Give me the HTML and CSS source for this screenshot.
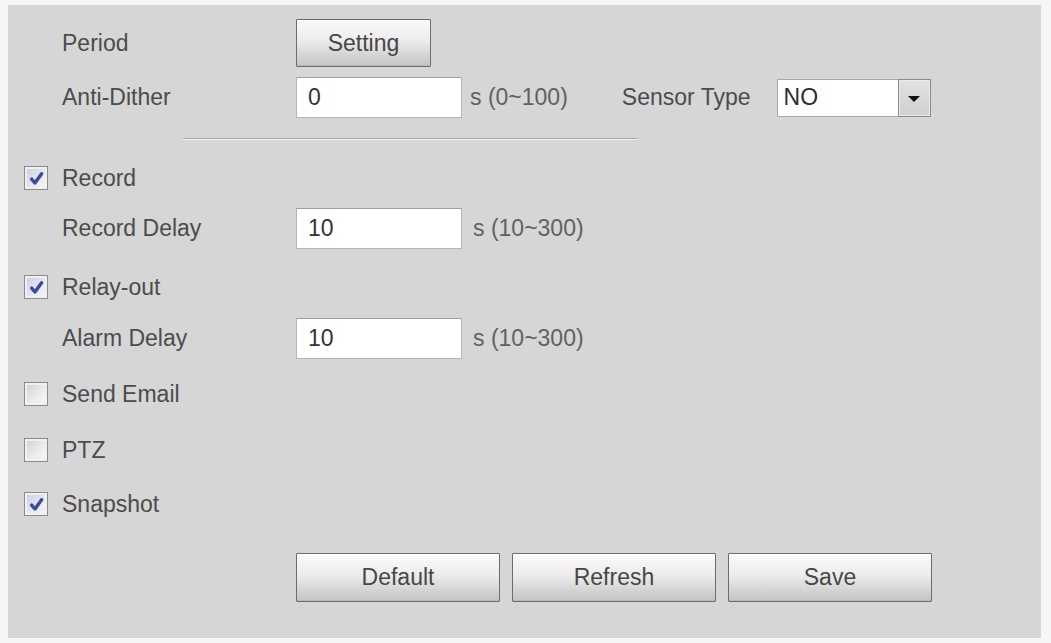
FILE: index.html
```html
<!DOCTYPE html>
<html>
<head>
<meta charset="utf-8">
<link rel="stylesheet" href="styles.css">
</head>
<body>
<div class="panel">
  <div class="row r-period">
    <span class="lbl">Period</span>
    <button class="btn btn-setting">Setting</button>
  </div>
  <div class="row r-anti">
    <span class="lbl">Anti-Dither</span>
    <div class="input">0</div>
    <span class="unit">s (0~100)</span>
    <span class="sensor-lbl">Sensor Type</span>
    <div class="select"><span class="sel-val">NO</span><span class="sel-btn"><span class="tri"></span></span></div>
  </div>
  <div class="sep"></div>
  <div class="row check r-record">
    <span class="cb on"><svg viewBox="0 0 12 12" class="tick"><path d="M2.6 6.4 L4.9 9.2 L9.6 2.6" /></svg></span>
    <span class="ctext">Record</span>
  </div>
  <div class="row r-recdelay">
    <span class="lbl">Record Delay</span>
    <div class="input">10</div>
    <span class="unit unit2">s (10~300)</span>
  </div>
  <div class="row check r-relay">
    <span class="cb on"><svg viewBox="0 0 12 12" class="tick"><path d="M2.6 6.4 L4.9 9.2 L9.6 2.6" /></svg></span>
    <span class="ctext">Relay-out</span>
  </div>
  <div class="row r-alarm">
    <span class="lbl">Alarm Delay</span>
    <div class="input">10</div>
    <span class="unit unit2">s (10~300)</span>
  </div>
  <div class="row check r-email">
    <span class="cb"></span>
    <span class="ctext">Send Email</span>
  </div>
  <div class="row check r-ptz">
    <span class="cb"></span>
    <span class="ctext">PTZ</span>
  </div>
  <div class="row check r-snap">
    <span class="cb on"><svg viewBox="0 0 12 12" class="tick"><path d="M2.6 6.4 L4.9 9.2 L9.6 2.6" /></svg></span>
    <span class="ctext">Snapshot</span>
  </div>
  <div class="row r-buttons">
    <button class="btn btn-big">Default</button>
    <button class="btn btn-big">Refresh</button>
    <button class="btn btn-big">Save</button>
  </div>
</div>
</body>
</html>
```
FILE: styles.css
```css
html, body {
  margin: 0;
  padding: 0;
  background: #f6f6f6;
}
body {
  font-family: "Liberation Sans", Arial, sans-serif;
  font-size: 23px;
  color: #4c4c4c;
}
.panel {
  margin: 5px 0 0 8px;
  width: 1033px;
  height: 633px;
  box-sizing: border-box;
  background: #d6d6d6;
  padding-top: 14px;
  display: flex;
  flex-direction: column;
}
.row {
  display: flex;
  align-items: center;
  height: 40px;
  padding-left: 54px;
  flex: none;
}
.row.check {
  padding-left: 16px;
}
.lbl {
  width: 234px;
  flex: none;
}
.r-period { height: 48px; }
.r-anti { height: 41px; margin-top: 10px; }
.sep {
  flex: none;
  margin-top: 20px;
  margin-left: 175px;
  width: 454px;
  height: 1px;
  background: #a4a4a4;
  border-bottom: 1px solid #f2f2f2;
}
.r-record { margin-top: 18px; }
.r-recdelay { height: 41px; margin-top: 10px; }
.r-relay { margin-top: 18px; }
.r-alarm { margin-top: 11px; }
.r-email { margin-top: 16px; }
.r-ptz { margin-top: 16px; }
.r-snap { margin-top: 14px; }
.r-buttons {
  height: 49px;
  margin-top: 29px;
  padding-left: 288px;
  gap: 12px;
}

.btn {
  font-family: "Liberation Sans", Arial, sans-serif;
  font-size: 23px;
  color: #474747;
  border: 1px solid #6c6c6c;
  border-radius: 1px;
  background: linear-gradient(#fafafa 0%, #ececec 45%, #d2d2d2 80%, #c4c4c4 100%);
  box-shadow: inset 0 1px 0 #ffffff, inset 0 -1px 0 #b8b8b8;
  padding: 0;
  margin: 0;
}
.btn-setting {
  width: 135px;
  height: 48px;
}
.btn-big {
  width: 204px;
  height: 49px;
}

.input {
  width: 166px;
  height: 41px;
  box-sizing: border-box;
  background: #ffffff;
  border: 1px solid #b4b4b4;
  border-top-color: #a0a0a0;
  color: #333333;
  padding-left: 11px;
  display: flex;
  align-items: center;
  flex: none;
}
.unit {
  margin-left: 8px;
  color: #616161;
}
.unit2 {
  margin-left: 11px;
}
.sensor-lbl {
  margin-left: 54px;
}
.select {
  margin-left: 26px;
  width: 154px;
  height: 38px;
  box-sizing: border-box;
  background: #ffffff;
  border: 1px solid #a8a8a8;
  display: flex;
  align-items: stretch;
  flex: none;
}
.sel-val {
  flex: 1;
  padding-left: 6px;
  display: flex;
  align-items: center;
  color: #2e2e2e;
}
.sel-btn {
  width: 33px;
  box-sizing: border-box;
  background: linear-gradient(#e2e2e2, #cfcfcf);
  border: 1px solid #8a8a8a;
  margin: -1px -1px -1px 0;
  box-shadow: inset 0 0 0 1px #ececec;
  display: flex;
  align-items: center;
  justify-content: center;
}
.tri {
  width: 0;
  height: 0;
  border-left: 6px solid transparent;
  border-right: 6px solid transparent;
  border-top: 6px solid #111111;
  margin-top: 2px;
}

.cb {
  width: 24px;
  height: 24px;
  box-sizing: border-box;
  border: 1px solid #8c8c8c;
  background: linear-gradient(135deg, #d0d0d0, #eeeeee 60%, #f8f8f8);
  box-shadow: inset 0 0 0 2px #f0f0f0;
  flex: none;
  display: flex;
  align-items: center;
  justify-content: center;
}
.cb.on {
  background: linear-gradient(135deg, #c9cce0, #e8e9f2 60%, #f6f6fa);
}
.tick {
  width: 17px;
  height: 17px;
}
.tick path {
  fill: none;
  stroke: #3b4b9c;
  stroke-width: 2.4;
  stroke-linecap: round;
  stroke-linejoin: round;
}
.ctext {
  margin-left: 14px;
}
```
